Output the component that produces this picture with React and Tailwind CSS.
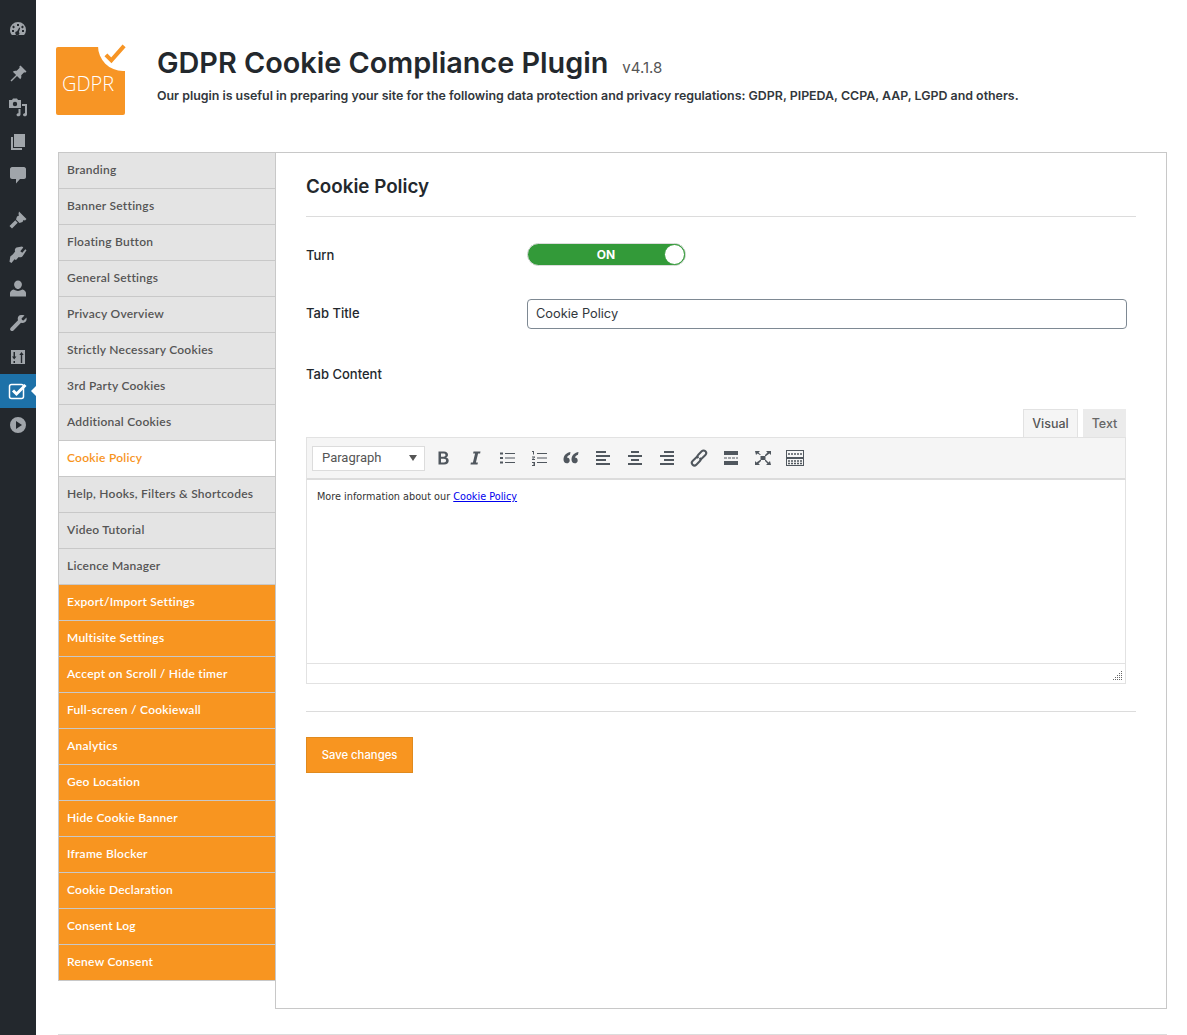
const greyTabs = [
  "Branding",
  "Banner Settings",
  "Floating Button",
  "General Settings",
  "Privacy Overview",
  "Strictly Necessary Cookies",
  "3rd Party Cookies",
  "Additional Cookies",
];
const lowerTabs = ["Help, Hooks, Filters & Shortcodes", "Video Tutorial", "Licence Manager"];
const orangeTabs = [
  "Export/Import Settings",
  "Multisite Settings",
  "Accept on Scroll / Hide timer",
  "Full-screen / Cookiewall",
  "Analytics",
  "Geo Location",
  "Hide Cookie Banner",
  "Iframe Blocker",
  "Cookie Declaration",
  "Consent Log",
  "Renew Consent",
];

function MenuIcon({ children }) {
  return (
    <svg viewBox="0 0 20 20" className="w-5 h-5 shrink-0 text-[#a0a5aa]" fill="currentColor" fillRule="evenodd">
      {children}
    </svg>
  );
}

function AdminMenu() {
  return (
    <aside className="w-9 shrink-0 bg-[#23282d] flex flex-col items-center">
      <div className="h-[19px]" />
      <MenuIcon>
        <path d="M10 3a8 8 0 0 0-8 8c0 2 .7 3.7 1.900 5h12.200A7.900 7.900 0 0 0 18 11a8 8 0 0 0-8-8zM9 5h2v2H9zM5.500 6.500l1.500 1.400-1.400 1.500-1.500-1.500zm9 0 1.400 1.400-1.500 1.500L13 7.900zM4 11h2v2H4zm10 0h2v2h-2zm-2.700-2.500.9.400-1.300 4.100a2 2 0 1 1-1.800-.8z" />
      </MenuIcon>
      <div className="h-[25px]" />
      <MenuIcon>
        <path d="M12.500 1.500 18.500 7.500l-1.300 1.300-1-.5-3 3c.4 1.500.1 2.900-.9 3.900L9 11.900l-5.500 5.600-1-1L8.100 11 4.800 7.700c1-1 2.400-1.300 3.900-.9l3-3-.5-1z" />
      </MenuIcon>
      <div className="h-[13px]" />
      <MenuIcon>
        <path d="M1 3h3l1-1.500h4L10 3h3v8H1zm6 1.800a2.200 2.200 0 1 0 0 4.400 2.200 2.200 0 0 0 0-4.400zM19 7v10.500c0 1-1 1.800-2.200 1.800s-1.800-.7-1.800-1.500.9-1.500 2-1.500V9h-3V7zM12.500 12v5.500c0 1-1 1.800-2.200 1.800s-1.800-.7-1.800-1.500.9-1.500 2-1.500V12z" />
      </MenuIcon>
      <div className="h-[15px]" />
      <MenuIcon>
        <path d="M6 2h11v13H6zM3 5h2v11h9v2H3z" />
      </MenuIcon>
      <div className="h-[13px]" />
      <MenuIcon>
        <path d="M4 2h12c1 0 2 1 2 2v8c0 1-1 2-2 2h-4l-4 4.500V14H4c-1 0-2-1-2-2V4c0-1 1-2 2-2z" />
      </MenuIcon>
      <div className="h-[25px]" />
      <MenuIcon>
        <path d="M11 1.500 18.500 9l-1.500 1.500-1.500-.5-1 2-3 1L8 9.500l1-3 2-1-.5-1.500zM7.300 10.300l2.400 2.400-5.700 5.800-2.500-2.500z" />
      </MenuIcon>
      <div className="h-[15px]" />
      <MenuIcon>
        <path d="m14 1.500 1.300 1-3 3.700 2 1.600 3-3.600 1.200 1-3.600 5.500c-1 1.500-2.700 1.800-4.200 1.200L8 15l-1.500-.8L3.500 18l-2-1.200.8-5.300L5 9.200l2.100-2.700C6.500 5 7 3.500 8.500 2.500z" />
      </MenuIcon>
      <div className="h-[14px]" />
      <MenuIcon>
        <path d="M10 1.500a3.900 3.900 0 0 1 3.900 4c0 2.100-1.700 4.500-3.900 4.500S6.100 7.600 6.100 5.500a3.900 3.900 0 0 1 3.900-4zM5.500 10.500 8 11.500c1.300.5 2.700.5 4 0l2.500-1c2 .5 3.500 2 3.500 3.500v3.500H2V14c0-1.500 1.500-3 3.500-3.500z" />
      </MenuIcon>
      <div className="h-[14px]" />
      <MenuIcon>
        <path d="M16.500 2.500 13.500 5.500l.5 1.500 1.500.5 3-3c.5 2-.2 3.500-1.300 4.500-1.200 1-2.700 1.200-4.200.7L5.500 17.500c-.8.800-2 .8-2.800 0s-.8-2 0-2.800L10 7.200c-.5-1.500-.3-3 .7-4.200 1-1.100 3.800-1.300 5.800-.5z" />
      </MenuIcon>
      <div className="h-[14px]" />
      <MenuIcon>
        <path d="M3 3h14v14H3zM5.500 5v4.500H4l2.200 3 2.200-3H7V5zM5.500 14v2H7v-2zM13.500 5l-2.200 3h1.500v8h1.400V8h1.500z" />
      </MenuIcon>
      <div className="mt-[7px] w-9 h-[34px] shrink-0 bg-[#1d71a8] flex items-center justify-center relative">
        <svg viewBox="0 0 20 20" className="w-5 h-5 text-white" fill="none" stroke="currentColor">
          <rect x="1.500" y="3.500" width="14" height="14" rx="2" strokeWidth="1.500" />
          <path d="m5 9.500 3.500 3.500L17.500 4" strokeWidth="3" />
        </svg>
        <span className="absolute right-0 top-[12px] border-y-[5px] border-r-[5px] border-y-transparent border-r-white" />
      </div>
      <div className="h-[7px]" />
      <MenuIcon>
        <path d="M10 2a8 8 0 1 0 0 16 8 8 0 0 0 0-16zM8 6l6 4-6 4z" />
      </MenuIcon>
    </aside>
  );
}

function Logo() {
  return (
    <div className="w-[69px] h-[68px] rounded-[2px] bg-[#f79525] relative shrink-0">
      <span className="absolute -right-[1px] -top-[1px] w-[28px] h-[25px] bg-white rounded-bl-[28px]" />
      <svg viewBox="0 0 24 22" className="absolute right-[-1px] -top-[3px] w-[22px] h-[20px] text-[#f79525]" fill="none" stroke="currentColor" strokeWidth="4.500">
        <path d="m2 12 6 6L22 2" />
      </svg>
      <span className="absolute left-[6px] top-[25px] text-white text-[20px] leading-6 font-light font-['Open_Sans',sans-serif]">
        GDPR
      </span>
    </div>
  );
}

function SideTab({ label, kind }) {
  const styles = {
    grey: "bg-[#e4e4e4] text-[#555]",
    active: "bg-white text-[#f7941d]",
    orange: "bg-[#f89520] text-white",
  };
  return (
    <div
      className={`h-9 pl-2 pb-[2px] flex items-center border-b border-b-[#c8c8c8] text-[12px] font-semibold font-['Lato',sans-serif] tracking-[0.25px] ${styles[kind]}`}
    >
      {label}
    </div>
  );
}

function ToolIcon({ children }) {
  return (
    <svg viewBox="0 0 20 20" className="w-5 h-5 text-[#50575e]" fill="currentColor">
      {children}
    </svg>
  );
}

function Toolbar() {
  return (
    <div className="h-[43px] bg-[#f5f5f5] border-x border-t border-[#e2e2e2] border-b-2 border-b-[#dcdcdc] flex items-center pl-[5px]">
      <div className="w-[113px] h-[25px] bg-white border border-[#dcdcdc] flex items-center justify-between pl-[9px] pr-[6px] text-[13px] text-[#555] font-['Roboto',sans-serif]">
        Paragraph
        <span className="border-x-[4px] border-t-[6px] border-x-transparent border-t-[#555] mr-[1px]" />
      </div>
      <div className="flex items-center gap-3 ml-2">
        <ToolIcon>
          <path d="M5.500 3.500H11c2.500 0 4 1.300 4 3.200 0 1.400-.8 2.400-2 2.900 1.700.4 2.700 1.500 2.700 3.200 0 2.300-1.700 3.700-4.500 3.700H5.500zm2.500 2v3.300h2.500c1.300 0 2-.6 2-1.700s-.7-1.600-2-1.600zm0 5.200v3.800h2.800c1.500 0 2.300-.7 2.300-1.900s-.8-1.900-2.300-1.900z" />
        </ToolIcon>
        <ToolIcon>
          <path d="M8.500 3.500h7l-.4 2h-2l-2.200 9h2l-.4 2h-7l.4-2h2l2.200-9h-2z" />
        </ToolIcon>
        <ToolIcon>
          <path d="M3 4.500h3v2H3zM8 5h10v1H8zM3 9h3v2H3zm5 .500h10v1H8zM3 13.500h3v2H3zm5 .500h10v1H8z" />
        </ToolIcon>
        <ToolIcon>
          <path d="M3 3h2v3.500H4V4H3zM3 8.500h3v1l-2 1.500h2v1H3v-1l2-1.500H3zM3 14h3v4H3v-1h2v-.500H4v-1h1V15H3zM8 5h10v1H8zm0 4.500h10v1H8zM8 14h10v1H8z" />
        </ToolIcon>
        <ToolIcon>
          <path d="M9.500 4C6 4.500 2.500 7 2.500 11.500c0 2.200 1.300 3.800 3.200 3.800 1.700 0 3-1.300 3-2.900s-1.200-2.800-2.800-2.800c.3-1.300 1.400-2.200 3.100-2.900zm8 0C14 4.500 10.500 7 10.500 11.500c0 2.200 1.300 3.800 3.200 3.800 1.700 0 3-1.300 3-2.900s-1.200-2.800-2.800-2.800c.3-1.300 1.400-2.200 3.100-2.900z" />
        </ToolIcon>
        <ToolIcon>
          <path d="M3 3h10v2H3zm0 4h14v2H3zm0 4h10v2H3zm0 4h14v2H3z" />
        </ToolIcon>
        <ToolIcon>
          <path d="M6 3h8v2H6zM3 7h14v2H3zm3 4h8v2H6zm-3 4h14v2H3z" />
        </ToolIcon>
        <ToolIcon>
          <path d="M7 3h10v2H7zM3 7h14v2H3zm4 4h10v2H7zm-4 4h14v2H3z" />
        </ToolIcon>
        <svg viewBox="0 0 20 20" className="w-5 h-5 text-[#50575e]" fill="none" stroke="currentColor" strokeWidth="2">
          <path d="M8.500 8.200 3.600 13a2.600 2.600 0 0 0 3.700 3.700l3.400-3.400a2.600 2.600 0 0 0 0-3.500" />
          <path d="m11.500 11.800 4.900-4.800a2.600 2.600 0 0 0-3.700-3.700L9.300 6.700a2.600 2.600 0 0 0 0 3.500" />
        </svg>
        <ToolIcon>
          <path d="M3 3h14v4H3zm0 10h14v4H3zM3 9.500h3v1H3zm4 0h3v1H7zm4 0h3v1h-3zm4 0h2v1h-2z" />
        </ToolIcon>
        <ToolIcon>
          <path d="M7.500 8h5v4h-5zM2 3h5L5.500 4.500 8 7H7L4.500 5.500 3 7zm16 0v4l-1.500-1.500L13 8h-1V7l2.500-2.500L13 3zM2 17v-4l1.500 1.500L7 12h1v1l-2.500 2.500L7 17zm16 0h-5l1.500-1.500L12 13v-1h1l2.500 2.500L17 13z" />
        </ToolIcon>
        <svg viewBox="0 0 20 20" className="w-5 h-5 text-[#50575e]" fill="none" stroke="currentColor" strokeWidth="1">
          <rect x="1.500" y="2.500" width="17" height="7" />
          <rect x="1.500" y="10.500" width="17" height="7" />
          <path d="M3 6h14M3 13h14M3 15.500h14" strokeWidth="1.500" strokeDasharray="2 1" />
        </svg>
      </div>
    </div>
  );
}

export default function App() {
  return (
    <div className="flex h-[1035px] overflow-hidden bg-white font-['Inter',sans-serif]">
      <AdminMenu />
      <main className="flex-1 pl-[22px] pr-5">
        <header className="h-[152px] pt-[47px] flex">
          <div className="-ml-[2px]">
            <Logo />
          </div>
          <div className="ml-8 -mt-[2px]">
            <div className="flex items-baseline">
              <h1 className="text-[28.800px] leading-[36px] font-semibold text-[#23282d]">GDPR Cookie Compliance Plugin</h1>
              <span className="ml-[14px] text-[15px] text-[#555]">v4.1.8</span>
            </div>
            <p className="mt-[7px] text-[12.400px] leading-4 font-semibold text-[#32373c]">
              Our plugin is useful in preparing your site for the following data protection and privacy regulations: GDPR, PIPEDA, CCPA, AAP, LGPD and others.
            </p>
          </div>
        </header>
        <div className="flex items-start">
          <nav className="w-[217px] shrink-0 border-l border-t border-[#c8c8c8]">
            {greyTabs.map((tab) => (
              <SideTab key={tab} label={tab} kind="grey" />
            ))}
            <SideTab label="Cookie Policy" kind="active" />
            {lowerTabs.map((tab) => (
              <SideTab key={tab} label={tab} kind="grey" />
            ))}
            {orangeTabs.map((tab) => (
              <SideTab key={tab} label={tab} kind="orange" />
            ))}
          </nav>
          <section className="flex-1 h-[857px] border border-[#c8c8c8] px-[30px] text-[#23282d]">
            <h2 className="pt-5 pb-4 text-[18.800px] leading-[27px] font-semibold border-b border-[#dcdcdc]">Cookie Policy</h2>
            <div className="mt-[26px] flex items-center h-[23px]">
              <label className="w-[221px] pt-[2px] text-[13px] font-medium">Turn</label>
              <div className="w-[159px] h-[23px] rounded-full bg-[#339a39] border border-[#dcdcdc] flex items-center relative">
                <span className="flex-1 text-center text-white text-[12px] font-bold pr-[1px]">ON</span>
                <span className="absolute right-0 w-[21px] h-[21px] rounded-full bg-white border border-[#339a39]" />
              </div>
            </div>
            <div className="mt-[33px] flex items-center">
              <label className="w-[221px] text-[13px] font-medium">Tab Title</label>
              <div className="w-[600px] h-[30px] border border-[#7e8993] rounded-[4px] pl-2 flex items-center text-[12.800px] text-[#32373c]">
                Cookie Policy
              </div>
            </div>
            <div className="mt-[35px] text-[13px] leading-5 font-medium">Tab Content</div>
            <div className="w-[820px] mt-[25px]">
              <div className="flex justify-end gap-[5px] h-[28px] text-[12.500px] font-medium">
                <div className="w-[55px] pt-[2px] bg-[#f5f5f5] border border-b-0 border-[#e2e2e2] text-[#555] flex items-center justify-center">Visual</div>
                <div className="w-[43px] pt-[2px] bg-[#ebebeb] text-[#666] flex items-center justify-center">Text</div>
              </div>
              <Toolbar />
              <div className="h-[183px] border-x border-[#e2e2e2] pl-[10px] pt-[10px] text-[9.700px] leading-[14px] text-[#333] font-['DejaVu_Sans',sans-serif]">
                More information about our <a href="#" className="text-[#0000ee] underline">Cookie Policy</a>
              </div>
              <div className="h-[21px] border border-[#e2e2e2] flex items-end justify-end pr-[2px] pb-[2px]">
                <svg viewBox="0 0 10 10" className="w-[10px] h-[10px] text-[#666]" fill="currentColor">
                  <path d="M8 0h1v1H8zM6 2h1v1H6zm2 0h1v1H8zM4 4h1v1H4zm2 0h1v1H6zm2 0h1v1H8zM2 6h1v1H2zm2 0h1v1H4zm2 0h1v1H6zm2 0h1v1H8zM0 8h1v1H0zm2 0h1v1H2zm2 0h1v1H4zm2 0h1v1H6zm2 0h1v1H8z" />
                </svg>
              </div>
            </div>
            <div className="mt-[27px] border-t border-[#dcdcdc]" />
            <button className="mt-[25px] w-[107px] h-9 bg-[#f89520] border border-[#e08a1e] text-white text-[11.300px] font-medium">
              Save changes
            </button>
          </section>
        </div>
        <div className="mt-[25px] border-t border-[#dcdcdc]" />
      </main>
    </div>
  );
}
